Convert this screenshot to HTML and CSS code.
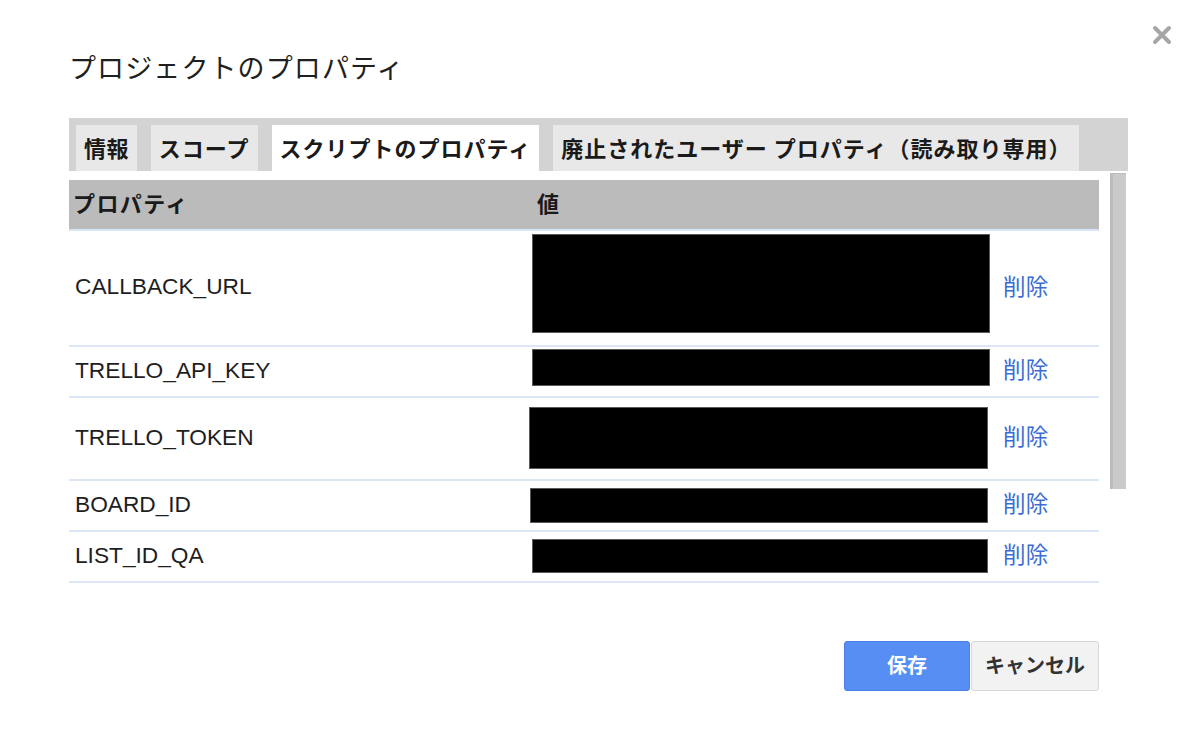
FILE: index.html
```html
<!DOCTYPE html>
<html lang="ja">
<head>
<meta charset="utf-8">
<title>プロジェクトのプロパティ</title>
<link rel="stylesheet" href="styles.css">
</head>
<body>
<div class="page">
  <button class="close" aria-label="閉じる">
    <svg width="20" height="20" viewBox="0 0 20 20"><path d="M3 3 L17 17 M17 3 L3 17" stroke="#a6a6a6" stroke-width="4" stroke-linecap="round"/></svg>
  </button>
  <div class="dialog">
    <h1 class="title">プロジェクトのプロパティ</h1>
    <div class="tabbar">
      <div class="tab">情報</div>
      <div class="tab">スコープ</div>
      <div class="tab active">スクリプトのプロパティ</div>
      <div class="tab">廃止されたユーザー プロパティ（読み取り専用）</div>
    </div>
    <div class="content">
      <div class="table">
        <div class="thead">
          <div class="th">プロパティ</div>
          <div class="th th-val">値</div>
        </div>
        <div class="row row-a">
          <div class="name">CALLBACK_URL</div>
          <div class="val"><div class="box box-a"></div></div>
          <a class="del" href="#">削除</a>
        </div>
        <div class="row row-b">
          <div class="name">TRELLO_API_KEY</div>
          <div class="val"><div class="box box-b"></div></div>
          <a class="del" href="#">削除</a>
        </div>
        <div class="row row-c">
          <div class="name">TRELLO_TOKEN</div>
          <div class="val"><div class="box box-c"></div></div>
          <a class="del" href="#">削除</a>
        </div>
        <div class="row row-b">
          <div class="name">BOARD_ID</div>
          <div class="val"><div class="box box-d"></div></div>
          <a class="del" href="#">削除</a>
        </div>
        <div class="row row-b">
          <div class="name">LIST_ID_QA</div>
          <div class="val"><div class="box box-e"></div></div>
          <a class="del" href="#">削除</a>
        </div>
      </div>
      <div class="scrollbar"></div>
    </div>
    <div class="actions">
      <button class="btn btn-save">保存</button>
      <button class="btn btn-cancel">キャンセル</button>
    </div>
  </div>
</div>
</body>
</html>
```
FILE: styles.css
```css
* { box-sizing: border-box; }
html, body { margin: 0; padding: 0; background: #fff; }
body {
  font-family: "Liberation Sans", "Noto Sans CJK JP", sans-serif;
  color: #222;
}
.page { position: relative; width: 1200px; height: 745px; }
.close {
  position: absolute;
  left: 1152px;
  top: 25px;
  width: 20px;
  height: 20px;
  padding: 0;
  border: 0;
  background: none;
  display: flex;
}
.dialog { padding-left: 69px; width: 1128px; }
.title {
  margin: 0;
  padding-top: 51px;
  font-family: "Noto Sans CJK JP", sans-serif;
  font-size: 27px;
  letter-spacing: 1.1px;
  line-height: 32px;
  font-weight: 400;
  color: #1f1f1f;
}
.tabbar {
  margin-top: 35px;
  height: 53px;
  background: #d3d3d3;
  display: flex;
  align-items: flex-end;
  padding-left: 7px;
  gap: 14px;
}
.tab {
  height: 46px;
  padding: 0 8px;
  background: #e8e8e8;
  font-family: "Noto Sans CJK JP", sans-serif;
  font-weight: 700;
  font-size: 22px;
  letter-spacing: 1px;
  line-height: 44px;
  color: #1a1a1a;
  white-space: nowrap;
}
.tab:first-child { letter-spacing: 0.4px; }
.tab.active { background: #fff; }
.content {
  margin-top: 2px;
  display: flex;
  gap: 11px;
  align-items: flex-start;
}
.table { width: 1030px; margin-top: 7px; }
.thead {
  height: 51px;
  background: #bbbbbb;
  border-bottom: 2px solid #d8e6f7;
  display: grid;
  grid-template-columns: 463px 1fr;
  align-items: center;
}
.th {
  font-family: "Noto Sans CJK JP", sans-serif;
  font-weight: 700;
  font-size: 22px;
  letter-spacing: 1.4px;
  line-height: 30px;
  padding-left: 4px;
  padding-bottom: 5px;
  color: #1a1a1a;
}
.th-val { padding-left: 5px; }
.row {
  display: grid;
  grid-template-columns: 460px 474px 1fr;
  align-items: center;
  border-bottom: 2px solid #dbe7f6;
}
.row-a { height: 116px; }
.row-b { height: 51px; }
.row-c { height: 83px; }
.name {
  padding-left: 6px;
  padding-bottom: 4px;
  font-size: 22.7px;
  line-height: 26px;
  color: #1e1e1e;
}
.val { align-self: start; }
.box {
  background: #000;
  border: 1px solid #5a5a5a;
}
.box-a { margin: 3px 0 0 3px; width: 458px; height: 99px; }
.box-b { margin: 2px 0 0 3px; width: 458px; height: 37px; }
.box-c { margin: 9px 0 0 0; width: 459px; height: 62px; }
.box-d { margin: 7px 0 0 1px; width: 458px; height: 35px; }
.box-e { margin: 7px 0 0 3px; width: 456px; height: 34px; }
.del {
  font-family: "Noto Sans CJK JP", sans-serif;
  font-size: 22.5px;
  letter-spacing: 0.3px;
  line-height: 28px;
  padding-bottom: 7px;
  color: #3a6cd4;
  text-decoration: none;
}
.scrollbar {
  width: 16px;
  height: 316px;
  background: #cacaca;
  border-left: 3px solid #bcbcbc;
  border-top: 1px solid #bcbcbc;
}
.actions {
  width: 1030px;
  margin-top: 58px;
  display: flex;
  justify-content: flex-end;
  gap: 1px;
}
.btn {
  height: 50px;
  border-radius: 3px;
  font-family: "Noto Sans CJK JP", sans-serif;
  font-weight: 700;
  font-size: 20px;
  line-height: 24px;
  padding: 0 0 3px;
}
.btn-save {
  width: 126px;
  background: #578ef3;
  border: 1px solid #4a80e6;
  color: #fff;
}
.btn-cancel {
  width: 128px;
  background: #f2f2f2;
  border: 1px solid #d8d8d8;
  color: #333;
}
```
